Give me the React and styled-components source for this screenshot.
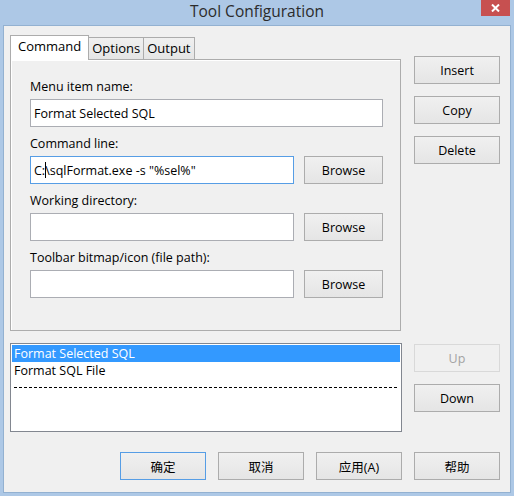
import React from 'react'
import styled, { createGlobalStyle } from 'styled-components'

const Global = createGlobalStyle`
  html, body { margin: 0; padding: 0; background: #adc8e6; }
  body { font-family: "Open Sans", "Noto Sans CJK SC", sans-serif; }
`

const Window = styled.div`
  width: 514px;
  height: 496px;
  background: #adc8e6;
  display: flex;
  flex-direction: column;
  box-sizing: border-box;
`

const TitleBar = styled.div`
  height: 25px;
  display: grid;
  grid-template-columns: 1fr auto 1fr;
  align-items: start;
`

const Title = styled.div`
  grid-column: 2;
  font-size: 15.5px;
  line-height: 22px;
  color: #2b2b2b;
`

const CloseButton = styled.div`
  grid-column: 3;
  justify-self: end;
  margin-right: 4px;
  width: 29px;
  height: 16px;
  background: #c75050;
  display: flex;
  align-items: center;
  justify-content: center;
`

const Client = styled.div`
  flex: 1;
  margin: 0 3px 3px 3px;
  border: 1px solid #93b1d1;
  background: #f0f0f0;
  padding: 9px 10px 0 6px;
  display: grid;
  grid-template-columns: 392px 86px;
  column-gap: 12px;
  align-content: start;
  font-size: 12.5px;
  color: #000;
`

const TabArea = styled.div`
  display: flex;
  flex-direction: column;
`

const TabStrip = styled.div`
  display: flex;
  align-items: flex-end;
  height: 25px;
  margin-bottom: -1px;
  position: relative;
  z-index: 1;
`

const Tab = styled.div`
  box-sizing: border-box;
  border: 1px solid #acacac;
  border-bottom: none;
  margin-left: ${p => (p.$first ? 0 : -1)}px;
  padding: 0 ${p => (p.$active ? 7 : 3)}px;
  height: ${p => (p.$active ? 25 : 22)}px;
  margin-bottom: ${p => (p.$active ? 0 : 1)}px;
  line-height: 21px;
  font-size: 13px;
  background: ${p => (p.$active ? '#fff' : 'linear-gradient(#f0f0f0, #e5e5e5)')};
  position: relative;
  z-index: ${p => (p.$active ? 2 : 1)};
`

const Panel = styled.div`
  width: 391px;
  height: 272px;
  box-sizing: border-box;
  border: 1px solid #acacac;
  box-shadow: inset 1px 1px 0 #fff;
  padding: 19px 17px 0 19px;
  display: flex;
  flex-direction: column;
  gap: 9px;
`

const Group = styled.div`
  display: flex;
  flex-direction: column;
  gap: 4px;
`

const Label = styled.div`
  line-height: 16px;
  height: 16px;
`

const FieldRow = styled.div`
  display: flex;
  gap: 10px;
  align-items: center;
`

const Field = styled.div`
  box-sizing: border-box;
  height: 28px;
  width: ${p => p.$w}px;
  background: #fff;
  border: 1px solid ${p => (p.$focus ? '#569de5' : '#abadb3')};
  padding: 0 3px;
  white-space: pre;
  display: flex;
  align-items: center;
`

const Caret = styled.span`
  display: inline-block;
  width: 1px;
  height: 16px;
  background: #000;
  margin-right: -1px;
`

const Button = styled.div`
  box-sizing: border-box;
  width: ${p => p.$w || 86}px;
  height: 28px;
  border: 1px solid ${p => (p.$default ? '#569de5' : p.$disabled ? '#d9d9d9' : '#acacac')};
  background: ${p => (p.$disabled ? '#f0f0f0' : 'linear-gradient(#f0f0f0, #e5e5e5)')};
  color: ${p => (p.$disabled ? '#a3a3a3' : '#000')};
  display: flex;
  align-items: center;
  justify-content: center;
  flex-shrink: 0;
`

const SideColumn = styled.div`
  display: flex;
  flex-direction: column;
  gap: 12px;
  padding-top: ${p => p.$top}px;
`

const ListBox = styled.div`
  margin-top: 12px;
  width: 392px;
  height: 89px;
  box-sizing: border-box;
  border: 1px solid #828790;
  background: #fff;
  padding: 1px;
`

const ListRow = styled.div`
  height: 17px;
  line-height: 17px;
  padding-left: 2px;
  background: ${p => (p.$selected ? '#3399ff' : 'transparent')};
  color: ${p => (p.$selected ? '#fff' : '#000')};
`

const Separator = styled.div`
  height: 17px;
  margin: 0 2px;
  display: flex;
  align-items: center;
  &::after {
    content: '';
    flex: 1;
    height: 1px;
    background: repeating-linear-gradient(90deg, #000 0 3px, transparent 3px 5px);
  }
`

const BottomBar = styled.div`
  grid-column: 1 / 3;
  display: flex;
  justify-content: flex-end;
  gap: 12px;
  margin-top: 20px;
`

export default function App() {
  return (
    <>
      <Global />
      <Window>
        <TitleBar>
          <Title>Tool Configuration</Title>
          <CloseButton>
            <svg width="9" height="8" viewBox="0 0 9 8">
              <path d="M1 0.5 L8 7.5 M8 0.5 L1 7.5" stroke="#fff" strokeWidth="2" />
            </svg>
          </CloseButton>
        </TitleBar>
        <Client>
          <TabArea>
            <TabStrip>
              <Tab $active $first>Command</Tab>
              <Tab>Options</Tab>
              <Tab>Output</Tab>
            </TabStrip>
            <Panel>
              <Group>
                <Label>Menu item name:</Label>
                <Field $w={353}>Format Selected SQL</Field>
              </Group>
              <Group>
                <Label>Command line:</Label>
                <FieldRow>
                  <Field $w={264} $focus>C:<Caret />\sqlFormat.exe -s "%sel%"</Field>
                  <Button $w={79}>Browse</Button>
                </FieldRow>
              </Group>
              <Group>
                <Label>Working directory:</Label>
                <FieldRow>
                  <Field $w={264} />
                  <Button $w={79}>Browse</Button>
                </FieldRow>
              </Group>
              <Group>
                <Label>Toolbar bitmap/icon (file path):</Label>
                <FieldRow>
                  <Field $w={264} />
                  <Button $w={79}>Browse</Button>
                </FieldRow>
              </Group>
            </Panel>
          </TabArea>
          <SideColumn $top={21}>
            <Button>Insert</Button>
            <Button>Copy</Button>
            <Button>Delete</Button>
          </SideColumn>
          <ListBox>
            <ListRow $selected>Format Selected SQL</ListRow>
            <ListRow>Format SQL File</ListRow>
            <Separator />
          </ListBox>
          <SideColumn $top={13}>
            <Button $disabled>Up</Button>
            <Button>Down</Button>
          </SideColumn>
          <BottomBar>
            <Button $default>确定</Button>
            <Button>取消</Button>
            <Button>应用(A)</Button>
            <Button>帮助</Button>
          </BottomBar>
        </Client>
      </Window>
    </>
  )
}
